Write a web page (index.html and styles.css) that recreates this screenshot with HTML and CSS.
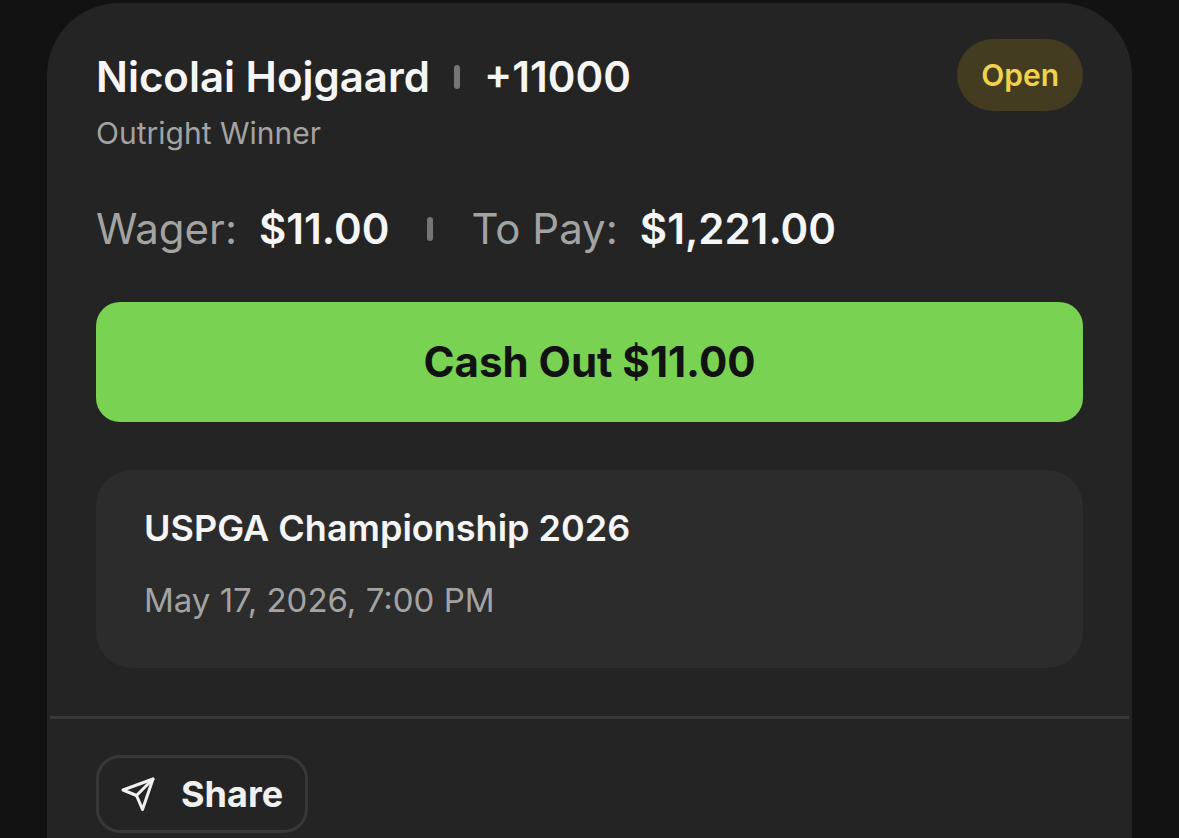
FILE: index.html
```html
<!DOCTYPE html>
<html lang="en">
<head>
    <meta charset="UTF-8">
    <meta name="viewport" content="width=device-width, initial-scale=1.0">
    <title>My Bets</title>
    <link rel="stylesheet" href="styles.css">
</head>
<body>
    <main class="bet-card">
        <div class="bet-body">
            <header class="bet-header">
                <div class="bet-info">
                    <h1 class="selection">
                        <span>Nicolai Hojgaard</span>
                        <span class="separator"></span>
                        <span>+11000</span>
                    </h1>
                    <p class="market">Outright Winner</p>
                </div>
                <span class="status">Open</span>
            </header>

            <div class="stakes">
                <span class="stake"><span class="label">Wager:</span> <strong>$11.00</strong></span>
                <span class="separator"></span>
                <span class="stake"><span class="label">To Pay:</span> <strong>$1,221.00</strong></span>
            </div>

            <button type="button" class="cash-out">Cash Out $11.00</button>

            <section class="event">
                <h2>USPGA Championship 2026</h2>
                <p>May 17, 2026, 7:00 PM</p>
            </section>
        </div>

        <footer class="bet-footer">
            <button type="button" class="share">
                <svg width="36" height="36" viewBox="0 0 36 36" fill="none" stroke="currentColor" stroke-width="3" stroke-linejoin="round" stroke-linecap="round" aria-hidden="true">
                    <path d="M32 3 2 14l13.500 5.500L21.500 33.500Z"/>
                    <path d="M32 3 15.500 19.500"/>
                </svg>
                Share
            </button>
        </footer>
    </main>
</body>
</html>
```

FILE: styles.css
```css
* {
    box-sizing: border-box;
    margin: 0;
    padding: 0;
}
body {
    display: flex;
    flex-direction: column;
    min-height: 100vh;
    padding: 3px 47px 0;
    background: #121212;
    color: #f5f5f5;
    font-family: Inter, "Liberation Sans", sans-serif;
}
button {
    font-family: inherit;
    cursor: pointer;
}
.bet-card {
    flex: 1;
    border: 3px solid #242424;
    border-bottom: none;
    border-radius: 72px 72px 0 0;
    background: #242424;
}
.bet-body {
    padding: 33px 46px 48px;
}
.bet-header {
    display: flex;
    justify-content: space-between;
    align-items: flex-start;
}
.bet-info {
    padding-top: 12px;
}
.selection {
    display: flex;
    align-items: center;
    gap: 24px;
    font-size: 42px;
    font-weight: 600;
    line-height: 52px;
}
.separator {
    width: 6px;
    height: 24px;
    border-radius: 3px;
    background: #757575;
}
.market {
    margin-top: 12px;
    color: #a3a3a3;
    font-size: 30px;
    line-height: 36px;
}
.status {
    padding: 18px 24px;
    border-radius: 36px;
    background: #433c20;
    color: #f0d34d;
    font-size: 30px;
    font-weight: 600;
    line-height: 36px;
}
.stakes {
    display: flex;
    align-items: center;
    gap: 38px;
    margin-top: 52px;
    font-size: 42px;
    line-height: 52px;
}
.stake {
    display: flex;
    gap: 22px;
}
.stake strong {
    font-weight: 600;
}
.label {
    color: #a3a3a3;
}
.cash-out {
    display: block;
    width: 100%;
    margin-top: 47px;
    padding: 34px 24px;
    border: none;
    border-radius: 24px;
    background: #79d252;
    color: #121212;
    font-size: 42px;
    font-weight: 700;
    line-height: 52px;
}
.event {
    margin-top: 48px;
    padding: 36px 48px 46px;
    border-radius: 36px;
    background: #2c2c2c;
}
.event h2 {
    font-size: 36px;
    font-weight: 600;
    line-height: 44px;
}
.event p {
    margin-top: 28px;
    color: #a3a3a3;
    font-size: 33px;
    line-height: 44px;
}
.bet-footer {
    padding: 36px 46px 0;
    border-top: 3px solid #383838;
}
.share {
    display: flex;
    align-items: center;
    gap: 24px;
    padding: 14px 22px;
    border: 3px solid #383838;
    border-radius: 24px;
    background: transparent;
    color: #f0f0f0;
    font-size: 36px;
    font-weight: 700;
    line-height: 44px;
}
```
